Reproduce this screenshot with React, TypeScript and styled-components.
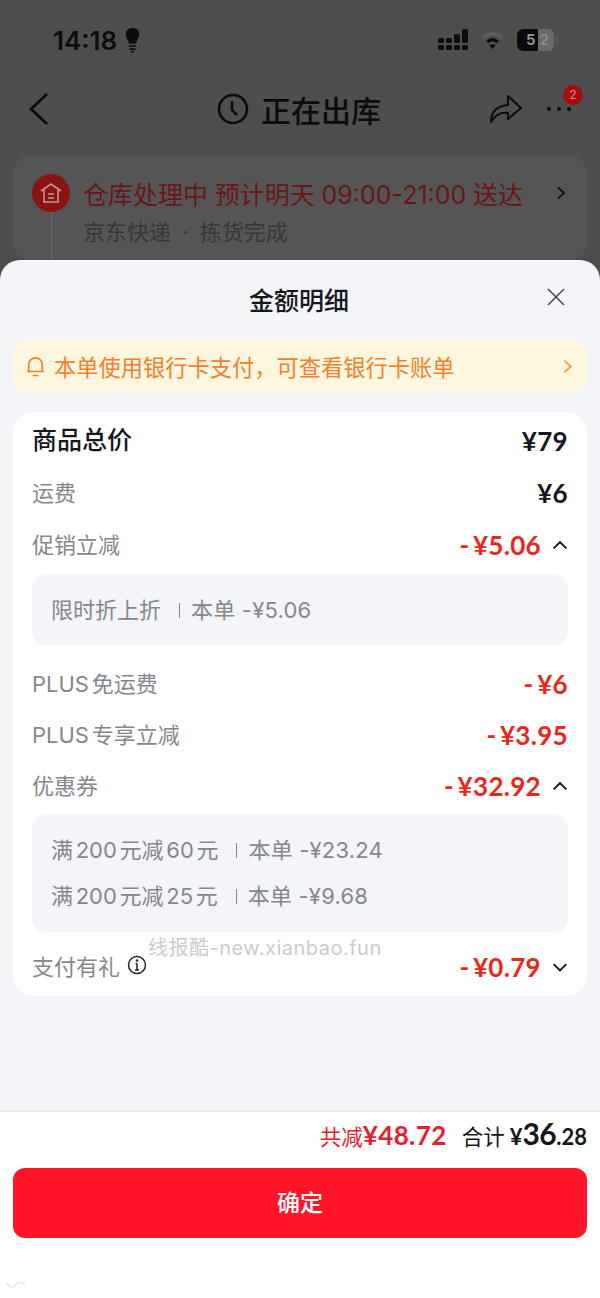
import * as React from "react";
import styled, { createGlobalStyle } from "styled-components";

const sans = `Inter, "Noto Sans CJK SC", sans-serif`;
const digits = `Lato, "Noto Sans CJK SC", sans-serif`;

const GlobalStyle = createGlobalStyle`
  html, body {
    margin: 0;
    padding: 0;
    background: #4e4e4e;
    font-family: ${sans};
  }
  * {
    box-sizing: border-box;
  }
`;

const Page = styled.div`
  width: 600px;
  height: 1298px;
  display: flex;
  flex-direction: column;
  overflow: hidden;
  position: relative;
  background: #4e4e4e;
`;

const Backdrop = styled.div`
  height: 260px;
  flex: none;
  overflow: hidden;
  display: flex;
  flex-direction: column;
`;

const StatusBar = styled.div`
  height: 80px;
  flex: none;
  padding: 0 41px 0 53px;
  display: flex;
  align-items: center;
  justify-content: space-between;
  color: #0c0c0c;
`;

const Clock = styled.div`
  display: flex;
  align-items: center;
  gap: 8px;
  font-size: 26px;
  font-weight: 600;
`;

const StatusIcons = styled.div`
  display: flex;
  align-items: center;
  gap: 12px;
`;

const Battery = styled.div`
  width: 37px;
  height: 22px;
  margin-right: 5px;
  border-radius: 6px;
  background: linear-gradient(90deg, #0a0a0a 0 56%, #6a6a6a 56% 100%);
  font-size: 15px;
  font-weight: 600;
  line-height: 22px;
  padding-left: 9px;
  display: flex;
  gap: 4px;
  position: relative;

  &::after {
    content: "";
    position: absolute;
    right: -4px;
    top: 7px;
    width: 2px;
    height: 8px;
    border-radius: 0 2px 2px 0;
    background: #5e5e5e;
  }
`;

const BatteryDigit = styled.span<{ $dim?: boolean }>`
  color: ${(p) => (p.$dim ? "#8d8d8d" : "#9a9a9a")};
`;

const NavBar = styled.div`
  height: 60px;
  flex: none;
  padding: 0 28px 2px 28px;
  display: flex;
  align-items: center;
  justify-content: space-between;
  position: relative;
`;

const NavTitle = styled.div`
  display: flex;
  align-items: center;
  gap: 12px;
  margin-left: 58px;
  font-size: 30px;
  font-weight: 500;
  color: #0c0c0c;
`;

const NavActions = styled.div`
  display: flex;
  align-items: center;
  gap: 24px;
  position: relative;
`;

const Badge = styled.div`
  position: absolute;
  top: -9px;
  right: -11px;
  width: 20px;
  height: 20px;
  border-radius: 50%;
  background: #a50c0c;
  color: #d88;
  font-size: 12px;
  line-height: 20px;
  text-align: center;
`;

const OrderCard = styled.div`
  margin: 16px 13px 0;
  height: 120px;
  padding: 18px 19px 0 19px;
  border-radius: 18px;
  background: #555555;
  display: flex;
  gap: 13px;
`;

const OrderIconColumn = styled.div`
  display: flex;
  flex-direction: column;
  align-items: center;
  width: 38px;
  flex: none;
`;

const OrderIcon = styled.div`
  width: 38px;
  height: 38px;
  border-radius: 50%;
  background: #8a1414;
  display: flex;
  align-items: center;
  justify-content: center;
`;

const OrderLine = styled.div`
  width: 1px;
  flex: 1;
  background: #6c6c6c;
`;

const OrderText = styled.div`
  flex: 1;
  display: flex;
  flex-direction: column;
`;

const OrderTitleRow = styled.div`
  display: flex;
  align-items: center;
  justify-content: space-between;
  height: 38px;
`;

const OrderTitle = styled.div`
  font-size: 25px;
  color: #691616;
  white-space: nowrap;
  word-spacing: -0.3px;
`;

const OrderSub = styled.div`
  margin-top: 2px;
  font-size: 22px;
  word-spacing: 5px;
  color: #373737;
`;

const Sheet = styled.div`
  flex: 1;
  display: flex;
  flex-direction: column;
  background: #f4f5f9;
  border-radius: 20px 20px 0 0;
`;

const SheetHeader = styled.div`
  height: 80px;
  flex: none;
  display: flex;
  align-items: center;
  justify-content: center;
  position: relative;
`;

const SheetTitle = styled.div`
  font-size: 25px;
  font-weight: 500;
  color: #15171c;
  margin: 0 2px 3px 0;
`;

const CloseButton = styled.div`
  position: absolute;
  right: 34px;
  top: 27px;
  width: 20px;
  height: 20px;
  display: flex;
`;

const Notice = styled.div`
  margin: 0 13px;
  height: 52px;
  flex: none;
  padding: 0 12px 0 13px;
  border-radius: 12px;
  background: #fff6df;
  color: #f0802a;
  font-size: 22.25px;
  display: flex;
  align-items: center;
  gap: 9px;
`;

const NoticeText = styled.div`
  flex: 1;
`;

const Card = styled.div`
  margin: 20px 13px 0;
  flex: none;
  padding: 3px 19px 6px;
  border-radius: 22px;
  background: #ffffff;
  display: flex;
  flex-direction: column;
  position: relative;
`;

const Row = styled.div<{ $height: number }>`
  height: ${(p) => p.$height}px;
  flex: none;
  display: flex;
  align-items: center;
  justify-content: space-between;
`;

const Label = styled.div<{ $strong?: boolean }>`
  font-size: ${(p) => (p.$strong ? 25 : 22)}px;
  font-weight: ${(p) => (p.$strong ? 500 : 400)};
  color: ${(p) => (p.$strong ? "#15171c" : "#85878c")};
  display: flex;
  align-items: center;
  gap: 7px;
  padding-bottom: ${(p) => (p.$strong ? 6 : 4)}px;
  word-spacing: -3.5px;
`;

const Amount = styled.div<{ $red?: boolean }>`
  display: flex;
  align-items: center;
  gap: 11px;
  font-family: ${digits};
  font-size: 26px;
  font-weight: 700;
  letter-spacing: 0.3px;
  word-spacing: -3px;
  color: ${(p) => (p.$red ? "#e8281c" : "#15171c")};
`;

const Detail = styled.div<{ $height: number }>`
  height: ${(p) => p.$height}px;
  flex: none;
  margin: 3px 0 12px;
  padding: 0 19px;
  border-radius: 14px;
  background: #f4f5f9;
  display: flex;
  flex-direction: column;
  justify-content: center;
  gap: 18px;
`;

const DetailLine = styled.div`
  font-size: 22px;
  line-height: 28px;
  color: #85878c;
  display: flex;
  align-items: center;
  white-space: nowrap;
`;

const DetailName = styled.span`
  word-spacing: -3.5px;
`;

const DetailValue = styled.span`
  white-space: pre;
  letter-spacing: 0.2px;
`;

const Divider = styled.span`
  width: 1px;
  height: 15px;
  background: #85878c;
  margin: 0 11px 0 18px;
`;

const Watermark = styled.div`
  position: absolute;
  left: 135px;
  top: 520px;
  font-size: 20px;
  color: #cbcbcb;
  letter-spacing: 0.5px;
  white-space: nowrap;
`;

const Spacer = styled.div`
  flex: 1;
`;

const Footer = styled.div`
  height: 188px;
  flex: none;
  background: #ffffff;
  border-top: 2px solid #e8e9ed;
  padding: 0 13px;
  display: flex;
  flex-direction: column;
`;

const Totals = styled.div`
  height: 56px;
  padding-top: 3px;
  flex: none;
  display: flex;
  align-items: baseline;
  justify-content: flex-end;
  gap: 15px;
`;

const Saved = styled.div`
  font-size: 21.5px;
  color: #e81c2e;
  display: flex;
  align-items: baseline;
`;

const SavedValue = styled.span`
  font-family: ${digits};
  font-size: 26px;
  font-weight: 700;
  letter-spacing: 0.4px;
`;

const Total = styled.div`
  font-size: 21.5px;
  color: #15171c;
  display: flex;
  align-items: baseline;
  gap: 5px;
`;

const TotalValue = styled.span`
  font-family: ${digits};
  font-weight: 700;
  font-size: 22px;
`;

const TotalWhole = styled.span`
  font-size: 30px;
  letter-spacing: -0.5px;
`;

const ConfirmButton = styled.button`
  height: 70px;
  flex: none;
  padding: 0 0 4px;
  border: none;
  border-radius: 12px;
  background: #ff1428;
  color: #ffffff;
  font-family: ${sans};
  font-size: 23px;
  font-weight: 500;
`;

const CornerMark = styled.div`
  position: absolute;
  left: 5px;
  bottom: 7px;
  display: flex;
`;

function Chevron({ up }: { up: boolean }) {
  return (
    <svg width="16" height="16" viewBox="0 0 14 14" fill="none" stroke="#111" strokeWidth="1.6">
      <path d={up ? "M1.5 10 7 4.5 12.5 10" : "M1.5 4.5 7 10 12.5 4.5"} />
    </svg>
  );
}

function RightArrow({ color, size }: { color: string; size: number }) {
  return (
    <svg width={size} height={size} viewBox="0 0 14 14" fill="none" stroke={color} strokeWidth="1.7">
      <path d="M4 1.5 10 7 4 12.5" />
    </svg>
  );
}

function DetailRow({ name, value }: { name: string; value: string }) {
  return (
    <DetailLine>
      <DetailName>{name}</DetailName>
      <Divider />
      <DetailValue>本单 {value}</DetailValue>
    </DetailLine>
  );
}

export default function App() {
  return (
    <Page>
      <GlobalStyle />
      <Backdrop>
        <StatusBar>
          <Clock>
            14:18
            <svg width="15" height="25" viewBox="0 0 14 24" fill="#0c0c0c">
              <path d="M7 0C3 0 .5 2.600.5 6c0 3.400 2.400 5 3 9h7c.6-4 3-5.600 3-9 0-3.400-2.500-6-6.500-6ZM3.500 16.500h7v1.500h-7ZM4 19.500h6V21H4ZM5.500 22h3v1.500h-3Z" />
            </svg>
          </Clock>
          <StatusIcons>
            <svg width="30" height="22" viewBox="0 0 30 22" fill="#0c0c0c">
              <rect x="0" y="9" width="6" height="5" rx="1.500" />
              <rect x="0" y="16" width="6" height="5" rx="1.500" />
              <rect x="8" y="9" width="6" height="5" rx="1.500" />
              <rect x="8" y="16" width="6" height="5" rx="1.500" />
              <rect x="16" y="5" width="6" height="9" rx="1.500" />
              <rect x="16" y="16" width="6" height="5" rx="1.500" />
              <rect x="24" y="0" width="6" height="14" rx="1.500" />
              <rect x="24" y="16" width="6" height="5" rx="1.500" />
            </svg>
            <svg width="25" height="19" viewBox="0 0 24 20" fill="none" strokeWidth="3.500">
              <path d="M2 7c6-5.500 14-5.500 20 0" stroke="#5e5e5e" />
              <path d="M6.500 11.500c3.400-3 7.600-3 11 0" stroke="#0c0c0c" />
              <path d="M12 19l-3.500-4c2-1.500 5-1.500 7 0Z" fill="#0c0c0c" stroke="none" />
            </svg>
            <Battery>
              <BatteryDigit>5</BatteryDigit>
              <BatteryDigit $dim>2</BatteryDigit>
            </Battery>
          </StatusIcons>
        </StatusBar>
        <NavBar>
          <svg width="22" height="34" viewBox="0 0 22 34" fill="none" stroke="#0c0c0c" strokeWidth="2.800">
            <path d="M19 2 3 17l16 15" />
          </svg>
          <NavTitle>
            <svg width="32" height="32" viewBox="0 0 32 32" fill="none" stroke="#0c0c0c" strokeWidth="2.600">
              <circle cx="16" cy="16" r="14" />
              <path d="M15 8v9l5 5" />
            </svg>
            正在出库
          </NavTitle>
          <NavActions>
            <svg width="32" height="30" viewBox="0 0 32 30" fill="none" stroke="#0c0c0c" strokeWidth="2">
              <path d="M18 2 31 14 18 25v-6C10 18 5 21 1 28c0-10 6-16 17-17Z" strokeLinejoin="round" />
            </svg>
            <svg width="26" height="6" viewBox="0 0 26 6" fill="#0c0c0c">
              <circle cx="3" cy="3" r="2" />
              <circle cx="13" cy="3" r="2" />
              <circle cx="23" cy="3" r="2" />
            </svg>
            <Badge>2</Badge>
          </NavActions>
        </NavBar>
        <OrderCard>
          <OrderIconColumn>
            <OrderIcon>
              <svg width="24" height="24" viewBox="0 0 24 24" fill="none" stroke="#c9928f" strokeWidth="1.600">
                <path d="M2 10 12 3l10 7M5 9v12h14V9M9 13h6M9 17h6" />
              </svg>
            </OrderIcon>
            <OrderLine />
          </OrderIconColumn>
          <OrderText>
            <OrderTitleRow>
              <OrderTitle>仓库处理中 预计明天 09:00-21:00 送达</OrderTitle>
              <RightArrow color="#0c0c0c" size={14} />
            </OrderTitleRow>
            <OrderSub>京东快递 · 拣货完成</OrderSub>
          </OrderText>
        </OrderCard>
      </Backdrop>
      <Sheet>
        <SheetHeader>
          <SheetTitle>金额明细</SheetTitle>
          <CloseButton>
            <svg width="20" height="20" viewBox="0 0 20 20" fill="none" stroke="#444" strokeWidth="1.500">
              <path d="M2 2l16 16M18 2 2 18" />
            </svg>
          </CloseButton>
        </SheetHeader>
        <Notice>
          <svg width="19" height="23" viewBox="0 0 21 24" fill="none" stroke="#f0802a" strokeWidth="1.800">
            <path d="M3 17.500V10a7.500 7.500 0 0 1 15 0v7.500ZM1 17.500h19M7.500 22h6" />
          </svg>
          <NoticeText>本单使用银行卡支付，可查看银行卡账单</NoticeText>
          <RightArrow color="#f0a040" size={15} />
        </Notice>
        <Card>
          <Row $height={52}>
            <Label $strong>商品总价</Label>
            <Amount>¥79</Amount>
          </Row>
          <Row $height={51}>
            <Label>运费</Label>
            <Amount>¥6</Amount>
          </Row>
          <Row $height={53}>
            <Label>促销立减</Label>
            <Amount $red>
              - ¥5.06
              <Chevron up />
            </Amount>
          </Row>
          <Detail $height={72}>
            <DetailRow name="限时折上折" value="-¥5.06" />
          </Detail>
          <Row $height={51}>
            <Label>PLUS 免运费</Label>
            <Amount $red>- ¥6</Amount>
          </Row>
          <Row $height={51}>
            <Label>PLUS 专享立减</Label>
            <Amount $red>- ¥3.95</Amount>
          </Row>
          <Row $height={51}>
            <Label>优惠券</Label>
            <Amount $red>
              - ¥32.92
              <Chevron up />
            </Amount>
          </Row>
          <Detail $height={118}>
            <DetailRow name="满 200 元减 60 元" value="-¥23.24" />
            <DetailRow name="满 200 元减 25 元" value="-¥9.68" />
          </Detail>
          <Row $height={46}>
            <Label>
              支付有礼
              <svg width="20" height="20" viewBox="0 0 20 20" fill="none" stroke="#222" strokeWidth="1.500">
                <circle cx="10" cy="10" r="8.500" />
                <path d="M10 8.500V15M8 15h4M8.500 8.500H10" />
                <circle cx="10" cy="5.500" r="0.600" />
              </svg>
            </Label>
            <Amount $red>
              - ¥0.79
              <Chevron up={false} />
            </Amount>
          </Row>
          <Watermark>线报酷-new.xianbao.fun</Watermark>
        </Card>
        <Spacer />
        <Footer>
          <Totals>
            <Saved>
              共减<SavedValue>¥48.72</SavedValue>
            </Saved>
            <Total>
              合计
              <TotalValue>
                ¥<TotalWhole>36</TotalWhole>.28
              </TotalValue>
            </Total>
          </Totals>
          <ConfirmButton>确定</ConfirmButton>
        </Footer>
      </Sheet>
      <CornerMark>
        <svg width="22" height="12" viewBox="0 0 22 12" fill="none" stroke="#e9e9e9" strokeWidth="2">
          <path d="M1 4l6 5M8 8l5-5M14 3l6 3" />
        </svg>
      </CornerMark>
    </Page>
  );
}
